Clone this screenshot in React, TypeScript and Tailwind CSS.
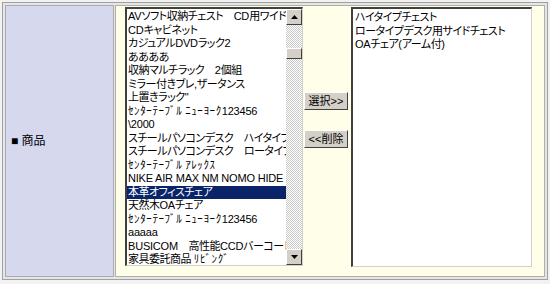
import React from "react";

const leftItems = [
  "AVソフト収納チェスト　CD用ワイド",
  "CDキャビネット",
  "カジュアルDVDラック2",
  "ああああ",
  "収納マルチラック　2個組",
  "ミラー付きブレ,ザータンス",
  "上置きラック\"",
  "ｾﾝﾀｰﾃｰﾌﾞﾙ ﾆｭｰﾖｰｸ123456",
  "\\2000",
  "スチールパソコンデスク　ハイタイプ",
  "スチールパソコンデスク　ロータイプ",
  "ｾﾝﾀｰﾃｰﾌﾞﾙ ｱﾚｯｸｽ",
  "NIKE AIR MAX NM NOMO HIDE",
  "本革オフィスチェア",
  "天然木OAチェア",
  "ｾﾝﾀｰﾃｰﾌﾞﾙ ﾆｭｰﾖｰｸ123456",
  "aaaaa",
  "BUSICOM　高性能CCDバーコードリーダー",
  "家具委託商品 ﾘﾋﾞﾝｸﾞ",
];

const rightItems = [
  "ハイタイプチェスト",
  "ロータイプデスク用サイドチェスト",
  "OAチェア(アーム付)",
];

function Runs({ text }: { text: string }) {
  const parts = text.split(/([\x20-\x7E]+|[\uFF61-\uFF9F]+)/).filter((p) => p.length > 0);
  return (
    <>
      {parts.map((p, i) => {
        let cls = "tracking-[-0.5px] [font-feature-settings:'palt']";
        if (/^[\x20-\x7E]+$/.test(p)) cls = "tracking-[-0.2px]";
        else if (/^[\uFF61-\uFF9F]+$/.test(p)) cls = "tracking-[0.6px]";
        return (
          <span key={i} className={cls}>
            {p}
          </span>
        );
      })}
    </>
  );
}

function ArrowBtn({ up }: { up: boolean }) {
  return (
    <div className="w-[16px] h-[16px] bg-[#d4d0c8] border-t border-l border-t-[#ffffff] border-l-[#ffffff] border-b border-r border-b-[#404040] border-r-[#404040] flex items-center justify-center shrink-0">
      <svg width="7" height="4" viewBox="0 0 7 4">
        {up ? (
          <polygon points="3.5,0 7,4 0,4" fill="#000" />
        ) : (
          <polygon points="0,0 7,0 3.5,4" fill="#000" />
        )}
      </svg>
    </div>
  );
}

export default function App() {
  const font = "font-['Liberation_Sans','Noto_Sans_CJK_JP',sans-serif]";
  return (
    <div className={`w-[550px] h-[284px] bg-[#f2f2f2] pt-[2px] pl-[2px] pr-[2px] overflow-hidden ${font}`}>
      <div className="h-[278px] border border-[#a0a0a0] bg-[#e6e6e6] p-[2px] flex gap-[1px]">
        {/* label cell */}
        <div className="w-[109px] border border-[#a8a8b8] bg-[#d6d9ee] flex items-center pl-[5px]">
          <span className="text-[12px] leading-[14px] text-black">■ 商品</span>
        </div>
        {/* content cell */}
        <div className="flex-1 border border-[#b0b0a0] bg-[#fffee9] flex items-start pl-[9px] pt-[1px]">
          {/* left listbox */}
          <div className="w-[178px] h-[259px] border-t-2 border-l-2 border-t-[#404040] border-l-[#404040] border-b border-r border-b-[#d4d0c8] border-r-[#d4d0c8] bg-white flex overflow-hidden">
            <div className="flex-1 overflow-hidden pt-[1px]">
              {leftItems.map((t, i) => (
                <div
                  key={i}
                  className={`h-[13.5px] leading-[13.5px] text-[11px] whitespace-nowrap pl-[1px] ${
                    i === 13 ? "bg-[#0a246a] text-white" : "text-black"
                  }`}
                >
                  <Runs text={t} />
                </div>
              ))}
            </div>
            <div className="w-[16px] flex flex-col shrink-0">
              <ArrowBtn up />
              <div className="flex-1 bg-[repeating-conic-gradient(#c8c8c8_0%_25%,#ffffff_0%_50%)] bg-[length:2px_2px] pt-[23px]">
                <div className="h-[11px] bg-[#d4d0c8] border-t border-l border-t-white border-l-white border-b border-r border-b-[#404040] border-r-[#404040]" />
              </div>
              <ArrowBtn up={false} />
            </div>
          </div>
          {/* buttons */}
          <div className="flex flex-col gap-[20px] pt-[85px] pl-[1px]">
            <button className="w-[44px] h-[18px] bg-[#d4d0c8] border border-t-white border-l-white border-b-[#404040] border-r-[#404040] text-[11px] leading-[16px] text-black flex items-center justify-center">
              選択&gt;&gt;
            </button>
            <button className="w-[44px] h-[18px] bg-[#d4d0c8] border border-t-white border-l-white border-b-[#404040] border-r-[#404040] text-[11px] leading-[16px] text-black flex items-center justify-center">
              &lt;&lt;削除
            </button>
          </div>
          {/* right listbox */}
          <div className="ml-[3px] w-[181px] h-[260px] border-t-2 border-l-2 border-t-[#404040] border-l-[#404040] border-b border-r border-b-[#d4d0c8] border-r-[#d4d0c8] bg-white pt-[2px] overflow-hidden">
            {rightItems.map((t, i) => (
              <div
                key={i}
                className="h-[13.5px] leading-[13.5px] text-[11px] whitespace-nowrap pl-[2px] text-black"
              >
                <Runs text={t} />
              </div>
            ))}
          </div>
        </div>
      </div>
    </div>
  );
}
